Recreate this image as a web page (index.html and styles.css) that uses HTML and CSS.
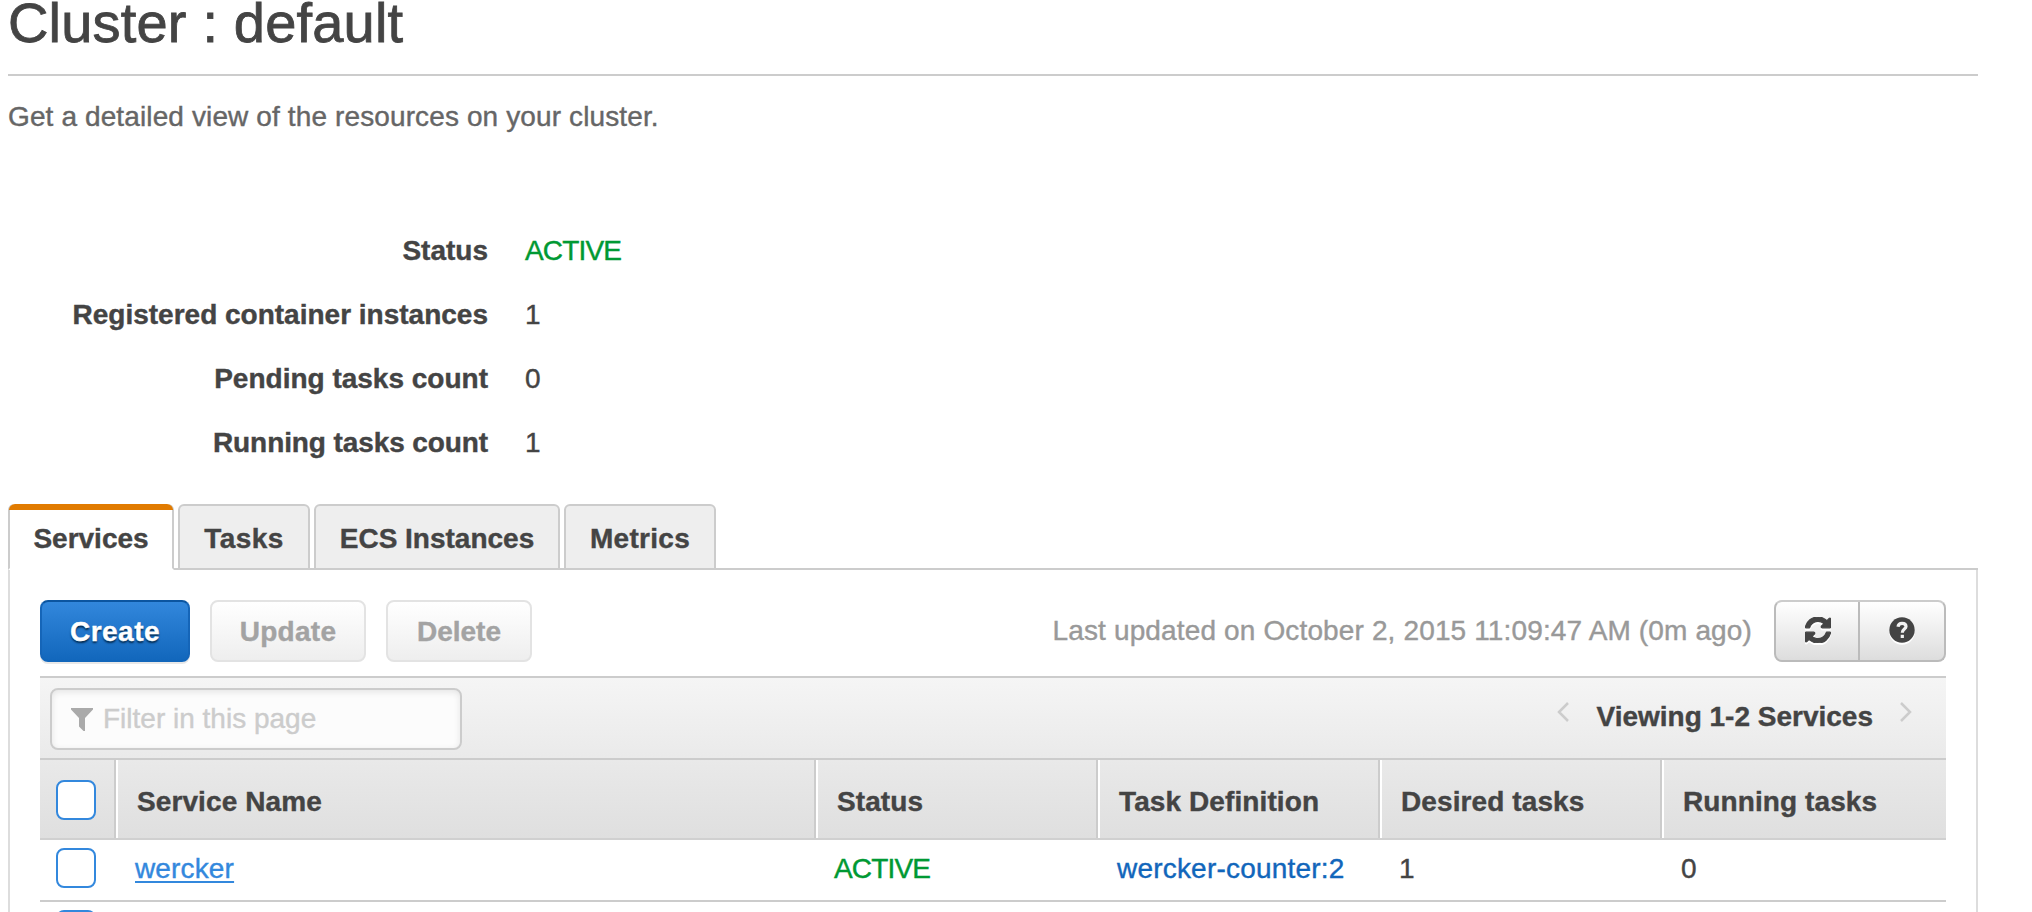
FILE: index.html
```html
<!DOCTYPE html>
<html lang="en">
<head>
<meta charset="utf-8">
<title>Cluster : default</title>
<link rel="stylesheet" href="styles.css">
</head>
<body>
<main class="page">
  <h1 class="title">Cluster : default</h1>
  <p class="intro">Get a detailed view of the resources on your cluster.</p>
  <dl class="facts">
    <dt>Status</dt><dd class="active">ACTIVE</dd>
    <dt>Registered container instances</dt><dd>1</dd>
    <dt>Pending tasks count</dt><dd>0</dd>
    <dt class="tight">Running tasks count</dt><dd>1</dd>
  </dl>
  <nav class="tabs">
    <a class="tab tab-services current">Services</a>
    <a class="tab tab-tasks">Tasks</a>
    <a class="tab tab-instances">ECS Instances</a>
    <a class="tab tab-metrics">Metrics</a>
    <span class="tabs-rest"></span>
  </nav>
  <section class="panel">
    <div class="toolbar">
      <button class="btn btn-create">Create</button>
      <button class="btn btn-update muted">Update</button>
      <button class="btn btn-delete muted">Delete</button>
      <span class="updated">Last updated on October 2, 2015 11:09:47 AM (0m ago)</span>
      <div class="btn-group">
        <button class="icon-btn" aria-label="Refresh">
          <svg class="icon refresh" viewBox="0 0 1536 1536"><path d="M1511 928q0 5-1 7-64 268-268 434.500T764 1536q-146 0-282.500-55T238 1324l-129 129q-19 19-45 19t-45-19-19-45V960q0-26 19-45t45-19h448q26 0 45 19t19 45-19 45l-137 137q71 66 161 102t187 36q134 0 250-65t186-179q11-17 53-117 8-23 30-23h192q13 0 22.500 9.500t9.500 22.500zm25-800v448q0 26-19 45t-45 19h-448q-26 0-45-19t-19-45 19-45l138-138Q969 256 768 256q-134 0-250 65T332 500q-11 17-53 117-8 23-30 23H50q-13 0-22.500-9.500T18 608v-7q65-268 270-434.500T768 0q146 0 284 55.500T1297 212l130-129q19-19 45-19t45 19 19 45z"/></svg>
        </button>
        <button class="icon-btn help" aria-label="Help">
          <svg class="icon" viewBox="0 0 26 26"><circle cx="13" cy="13" r="12.700"/><path class="mark" d="M9 9.700C9.300 7.300 10.800 6.300 13.100 6.300C15.500 6.300 17 7.500 17 9.400C17 12.200 13.300 12 13.300 15.800"/><path class="dot" d="M11.700 17.800h3.200v3.200h-3.200z"/></svg>
        </button>
      </div>
    </div>
    <div class="filterbar">
      <div class="filter">
        <svg class="funnel" viewBox="0 0 22 23"><path d="M0 0H22V1.500L14 10V23H12.500L8 18.500V10L0 1.500Z"/></svg>
        <span>Filter in this page</span>
      </div>
      <div class="pager">
        <svg class="chev" viewBox="0 0 12 20"><path d="M11 1L2 10L11 19"/></svg>
        <span class="viewing">Viewing 1-2 Services</span>
        <svg class="chev" viewBox="0 0 12 20"><path d="M1 1L10 10L1 19"/></svg>
      </div>
    </div>
    <div class="row head">
      <div class="pick"><span class="box"></span></div>
      <div class="cell">Service Name</div>
      <div class="cell">Status</div>
      <div class="cell">Task Definition</div>
      <div class="cell">Desired tasks</div>
      <div class="cell">Running tasks</div>
    </div>
    <div class="row data">
      <div class="pick"><span class="box"></span></div>
      <div class="cell"><a class="name">wercker</a></div>
      <div class="cell active">ACTIVE</div>
      <div class="cell link">wercker-counter:2</div>
      <div class="cell">1</div>
      <div class="cell">0</div>
    </div>
    <div class="row data">
      <div class="pick"><span class="box"></span></div>
    </div>
  </section>
</main>
</body>
</html>
```
FILE: styles.css
```css
* { box-sizing: border-box; }
html, body { margin: 0; background: #fff; }
html { overflow: hidden; }
.page {
  width: 1978px;
  height: 912px;
  padding-left: 8px;
  display: flex;
  flex-direction: column;
  font: 28px/32px "Liberation Sans", Arial, sans-serif;
  color: #444;
  -webkit-text-stroke: 0.4px currentColor;
}
.page > * { flex-shrink: 0; }
.title {
  margin: 0;
  height: 76px;
  border-bottom: 2px solid #ccc;
  font-size: 56px;
  line-height: 46px;
  font-weight: 400;
  letter-spacing: 0.18px;
  -webkit-text-stroke-width: 0.8px;
}
.intro { margin: 25px 0 0; color: #666; letter-spacing: 0.12px; }
.facts {
  margin: 86px 0 0;
  display: grid;
  grid-template-columns: 480px auto;
  column-gap: 37px;
  grid-auto-rows: 64px;
  line-height: 64px;
  height: 285px;
}
.facts dt { text-align: right; font-weight: 700; }
.facts .tight { letter-spacing: -0.1px; }
.facts dd { margin: 0; }
.active { color: #093; letter-spacing: -0.85px; }

.tabs { display: flex; height: 66px; }
.tab {
  height: 66px;
  margin-right: 4px;
  border: 2px solid #ccc;
  border-radius: 6px 6px 0 0;
  background: #eee;
  font-weight: 700;
  line-height: 66px;
  text-align: center;
  position: relative;
}
.tab:not(:last-of-type)::after {
  content: "";
  position: absolute;
  right: -6px;
  bottom: -2px;
  width: 4px;
  height: 2px;
  background: #ccc;
}
.tab.current {
  background: #fff;
  border-bottom-color: #fff;
  border-top: 0;
  line-height: 70px;
}
.tab.current::before {
  content: "";
  position: absolute;
  left: -1px;
  right: -1px;
  top: 0;
  height: 6px;
  border-radius: 6px 6px 0 0;
  background: #e17b00;
}
.tab-services { width: 166px; }
.tab-tasks { width: 132px; letter-spacing: 0.4px; }
.tab-instances { width: 246px; }
.tab-metrics { width: 152px; margin-right: 0; letter-spacing: 0.3px; }
.tabs-rest { flex: 1; border-bottom: 2px solid #ccc; }

.panel {
  height: 342px;
  padding: 30px 30px 0;
  border: solid #ddd;
  border-width: 0 2px;
  overflow: hidden;
}
.toolbar { display: flex; height: 76px; }
.btn {
  height: 62px;
  padding: 1px 0 0;
  border: 2px solid #1166bb;
  border-radius: 8px;
  font: 700 28px/58px "Liberation Sans", Arial, sans-serif;
}
.btn-create {
  width: 150px;
  margin-right: 20px;
  color: #fff;
  letter-spacing: 0.5px;
  background: linear-gradient(#3388dd, #1166bb);
  background-origin: border-box;
  border-color: #0b55a0 #1565b8 #1166bb;
  box-shadow: 0 2px 0 #e8e8e8;
  text-shadow: 0 2px 2px #00294f;
}
.muted { color: #a3a3a3; border-color: #e3e3e3; background: linear-gradient(#fff, #eee); }
.btn-update { width: 156px; margin-right: 20px; letter-spacing: 0.3px; }
.btn-delete { width: 146px; }
.updated { margin-left: auto; margin-right: 22px; line-height: 61px; color: #999; letter-spacing: 0.14px; }
.btn-group {
  display: flex;
  width: 172px;
  height: 62px;
  border: 2px solid #bbb;
  border-top-color: #ccc;
  border-radius: 8px;
  background: linear-gradient(#fff, #ddd);
}
.icon-btn {
  width: 82px;
  padding: 0 0 2px;
  border: 0;
  background: none;
  display: flex;
  align-items: center;
  justify-content: center;
}
.icon-btn.help { width: 86px; border-left: 2px solid #bbb; padding-right: 1px; }
.icon { width: 26px; height: 26px; margin-left: 2px; fill: #444; filter: drop-shadow(0 2px 0 #fff); }
.refresh { stroke: #444; stroke-width: 70; }
.help .icon { margin-left: 0; }
.mark { fill: none; stroke: #f2f2f2; stroke-width: 3.2; }
.dot { fill: #f2f2f2; }

.filterbar {
  display: flex;
  height: 82px;
  padding: 10px 34px 0 10px;
  justify-content: space-between;
  border-top: 2px solid #ccc;
  background: linear-gradient(#f5f5f5, #eaeaea);
}
.filter {
  display: flex;
  width: 412px;
  height: 62px;
  padding-left: 19px;
  border: 2px solid #ccc;
  border-radius: 8px;
  background: #fcfcfc;
  box-shadow: inset 0 2px 6px #e4e4e4;
  color: #ccc;
  line-height: 58px;
}
.funnel { width: 22px; height: 23px; margin: 18px 10px 0 0; fill: #aaa; }
.pager { display: flex; line-height: 57px; font-weight: 700; }
.chev { width: 12px; height: 20px; margin-top: 14px; fill: none; stroke: #ccc; stroke-width: 2.5; }
.viewing { margin: 0 27px; }

.row { display: grid; grid-template-columns: 74px 700px 282px 282px 282px 286px; }
.pick { padding-left: 16px; }
.box {
  display: block;
  width: 40px;
  height: 40px;
  border: 2px solid #3388dd;
  border-radius: 8px;
  background: #fff;
}
.head {
  height: 82px;
  border-top: 2px solid #ccc;
  border-bottom: 2px solid #d0d0d0;
  background: linear-gradient(#e9e9e9, #dfdfdf);
  font-weight: 700;
}
.head .pick { padding-top: 20px; line-height: 0; }
.head .cell {
  height: 78px;
  padding: 5px 0 0 21px;
  border-left: 2px solid #ccc;
  box-shadow: inset 2px 0 0 #fff;
  line-height: 73px;
  letter-spacing: 0.1px;
}
.data { height: 62px; border-bottom: 2px solid #ccc; line-height: 57px; }
.data .pick { padding-top: 8px; }
.data .cell { padding-left: 21px; }
.data .active { padding-left: 20px; }
.link { color: #1166bb; letter-spacing: 0.2px; }
.name { color: #3388dd; letter-spacing: 0.15px; text-decoration: underline; text-decoration-thickness: 2px; text-underline-offset: 3px; }
```
